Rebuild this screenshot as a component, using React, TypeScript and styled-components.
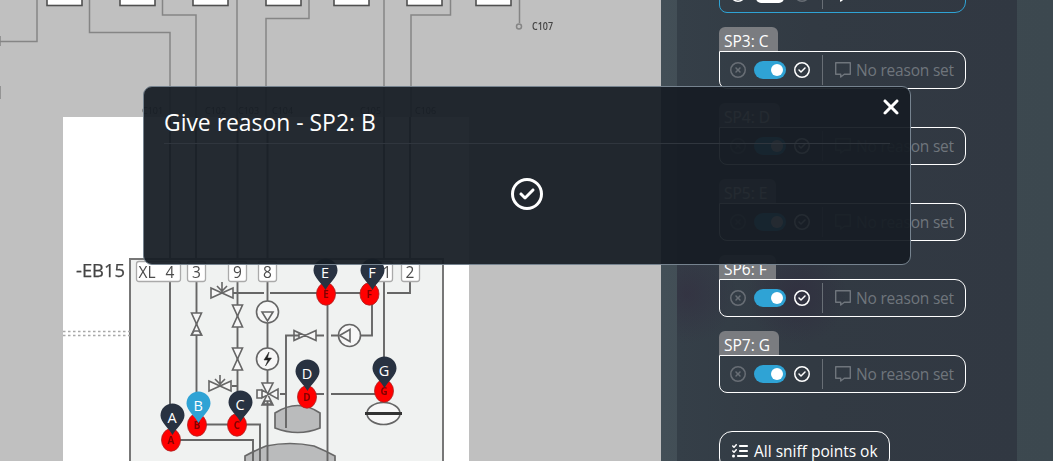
import React from 'react';
import styled, { createGlobalStyle } from 'styled-components';
import { FaRegCircleCheck, FaRegCircleXmark, FaXmark, FaListCheck } from 'react-icons/fa6';

const GlobalStyle = createGlobalStyle`
  * { box-sizing: border-box; }
  body { margin: 0; overflow: hidden; background: #c0c0c0; font-family: 'Open Sans', 'Noto Sans', sans-serif; color: #fff; }
`;

const Page = styled.main`
  position: relative;
  display: flex;
  width: 1053px;
  height: 461px;
  overflow: hidden;
`;

const DiagramPane = styled.section`
  flex: 0 0 661px;
  height: 461px;
  overflow: hidden;
  background: #c0c0c0;
  svg { display: block; }
`;

const Drawing = styled.g`
  filter: blur(0.5px);
`;

const Sidebar = styled.aside`
  flex: 1;
  height: 461px;
  padding: 0 36px 0 16px;
  background: linear-gradient(90deg, #434f57, #3e4a51 30%, #3c484f);
`;

const Panel = styled.div`
  height: 461px;
  padding-left: 42px;
  overflow: hidden;
  background:
    radial-gradient(circle at 10px 294px, rgba(50, 42, 62, 0.5), transparent 50px),
    radial-gradient(circle at 120px 295px, rgba(48, 42, 62, 0.6), transparent 50px),
    linear-gradient(90deg, #353f48, #323a43 40%, #313842);
`;

const PointList = styled.div`
  display: flex;
  flex-direction: column;
  gap: 14px;
  margin-top: -25px;
`;

const Point = styled.div``;

const Tag = styled.div<{ $width: number }>`
  width: ${(p) => p.$width}px;
  height: 24px;
  padding-left: 5px;
  border-radius: 6px 6px 0 0;
  background: #7a7c80;
  font-size: 15.5px;
  line-height: 28px;
  white-space: nowrap;
`;

const Box = styled.div<{ $active?: boolean }>`
  display: flex;
  align-items: center;
  width: 247px;
  height: 38px;
  padding-left: 10px;
  border: 1px solid ${(p) => (p.$active ? '#2fa3d5' : '#fff')};
  border-radius: ${(p) => (p.$active ? '0 0 11px 8px' : '0 11px 11px 8px')};
`;

const StateIcon = styled.span<{ $dim?: boolean }>`
  display: flex;
  font-size: 16px;
  color: ${(p) => (p.$dim ? '#686e75' : '#fff')};
`;

const Toggle = styled.span<{ $on: boolean }>`
  display: flex;
  align-items: center;
  justify-content: flex-end;
  width: ${(p) => (p.$on ? 32 : 28)}px;
  height: 18px;
  margin: 0 ${(p) => (p.$on ? 8 : 10)}px;
  padding: 3px;
  border-radius: ${(p) => (p.$on ? '9px' : '5px')};
  background: ${(p) => (p.$on ? '#2fa3d5' : '#fff')};
  &::after {
    content: '';
    width: 12px;
    height: 12px;
    border-radius: 50%;
    background: #fff;
  }
`;

const Reason = styled.div<{ $bright?: boolean }>`
  display: flex;
  align-items: center;
  gap: 5px;
  height: 30px;
  margin-left: 12px;
  padding-left: 12px;
  border-left: 1px solid #686e75;
  color: ${(p) => (p.$bright ? '#fff' : '#6f757c')};
  font-size: 15.5px;
  letter-spacing: -0.2px;
  line-height: 20px;
  white-space: nowrap;
  span { padding-bottom: 1px; }
`;

const AllOk = styled.button`
  display: flex;
  align-items: center;
  gap: 6px;
  width: 171px;
  height: 40px;
  margin-top: 38px;
  padding: 0 0 0 12px;
  border: 1px solid #fff;
  border-radius: 13px;
  background: transparent;
  color: #fff;
  font: 15.5px 'Open Sans', sans-serif;
  white-space: nowrap;
`;

const Dialog = styled.div`
  position: absolute;
  left: 143px;
  top: 86px;
  width: 768px;
  height: 179px;
  padding: 20px;
  border: 1px solid #76838f;
  border-radius: 9px;
  background: rgba(22, 29, 36, 0.94);
`;

const DialogTitle = styled.h1`
  height: 37px;
  margin: 0;
  padding-top: 1px;
  border-bottom: 1px solid #30363e;
  font-size: 22.9px;
  font-weight: 400;
  line-height: 30px;
`;

const DialogBody = styled.div`
  display: flex;
  justify-content: center;
  padding-top: 34px;
  font-size: 32px;
`;

const Close = styled.span`
  position: absolute;
  top: 8px;
  right: 7px;
  display: flex;
  font-size: 24px;
`;

function CommentIcon() {
  return (
    <svg width="16" height="16" viewBox="0 0 16 16" fill="none" stroke="currentColor" strokeWidth="1.4" strokeLinejoin="round">
      <path d="M.7 .8h14.6v11.4h-6l-3.6 2.8v-2.8h-5z" />
    </svg>
  );
}

type SniffPoint = { name?: string; width: number; active?: boolean };

function PointRow({ name, width, active }: SniffPoint) {
  return (
    <Point>
      {name && <Tag $width={width}>{name}</Tag>}
      <Box $active={active}>
        <StateIcon $dim={!active}><FaRegCircleXmark /></StateIcon>
        <Toggle $on={!active} />
        <StateIcon $dim={active}><FaRegCircleCheck /></StateIcon>
        <Reason $bright={active}><CommentIcon />{!active && <span>No reason set</span>}</Reason>
      </Box>
    </Point>
  );
}

const points: SniffPoint[] = [
  { width: 58, active: true },
  { name: 'SP3: C', width: 59 },
  { name: 'SP4: D', width: 61 },
  { name: 'SP5: E', width: 57 },
  { name: 'SP6: F', width: 57 },
  { name: 'SP7: G', width: 60 },
];

const pins: [string, number, number, number, number][] = [
  ['A', 172.5, 435, 171, 440],
  ['B', 198.5, 423, 197, 425],
  ['C', 240.5, 422, 237, 425],
  ['D', 307.5, 391, 307, 397],
  ['E', 325.5, 290, 326, 294],
  ['F', 372.5, 290, 369.5, 294],
  ['G', 384.5, 388, 384, 391],
];

const wireLabels: [string, number][] = [
  ['C101', 142],
  ['C102', 205],
  ['C103', 238],
  ['C104', 272],
  ['C105', 360],
  ['C106', 415],
];

const valve = 'M-5-11H5L-5 11H5Z';

function Diagram() {
  return (
    <svg width="661" height="461" viewBox="0 0 661 461" fontFamily="'Open Sans', 'Noto Sans', sans-serif">
      <Drawing>
        <g fill="none" stroke="#858585" strokeWidth="1.5">
          <path d="M0 41.5H37V0M89.5 0V32.5H170V272M162.5 0V15H196V272M237 0V272M309 0V18.5H266V272M384 0V272M450.5 0V15H411V272M519.5 0V23" />
          <circle cx="519" cy="26.5" r="2.5" />
          <path d="M0 36v10M0 86v13" />
        </g>
        <g fill="#fff" stroke="#505050" strokeWidth="1.6">
          {[47, 120, 193, 266, 334, 407, 476].map((x) => <rect key={x} x={x} y="-10" width="35" height="15.5" />)}
        </g>
        <text x="532" y="29.5" fontSize="10" fontWeight="600" fill="#444" textLength="21" lengthAdjust="spacingAndGlyphs">C107</text>
        <rect x="63" y="117" width="406" height="350" fill="#fff" />
        <path d="M170 117V270M196 117V270M237.5 117V270M267.5 117V270M384 117V270M410 117V270" stroke="#707070" strokeWidth="2" />
        <g fontSize="9" fill="#444">
          {wireLabels.map(([t, x]) => (
            <text key={t} x={x} y="114" textLength="21" lengthAdjust="spacingAndGlyphs">{t}</text>
          ))}
        </g>
        <rect x="130" y="259" width="313" height="230" fill="#f0f2f1" stroke="#777" strokeWidth="2" />
        <text x="76" y="276.5" fontSize="17.5" fill="#444" stroke="#444" strokeWidth=".25" textLength="49" lengthAdjust="spacingAndGlyphs">-EB15</text>
        <path d="M63 331.5H130M63 335.5H130" stroke="#a8a8a8" strokeWidth="1.7" strokeDasharray="2.5 2.5" />
        <path d="M275 413Q298 398 320 413V428Q298 437 275 428Z" fill="#babbbc" stroke="#686868" strokeWidth="1.7" />
        <path d="M245 465V456Q254 451 266 446Q290 441 314 446Q326 451 335 456V465Z" fill="#babbbc" stroke="#686868" strokeWidth="1.7" />
        <g fill="none" stroke="#666" strokeWidth="1.9">
          <path d="M170 280V433M196.5 280V420M237.5 280V415M267.5 280V461" />
          <path d="M233 293H264M270 293H374M387 293H410V280M372 300V335.5H360M350 335.5H331M324 335.5H286V428M384 280V380M327.5 305V461" />
          <path d="M205 424.5H260V461M180 440H253V461M280 394H286M316 394H324M331 394H376M232 386H237" />
        </g>
        <g fill="#f7f7f7" stroke="#666" strokeWidth="1.6">
          <path d={valve} transform="translate(196.5 324)" />
          <path d="M191.5 335l2.5-4h5l2.5 4Z" />
          <path d={valve} transform="translate(237.5 316)" />
          <path d={valve} transform="translate(237.5 359)" />
          <path d="M211 288V298L233 288V298ZM222 293V282M217 286L222 291L227 286" />
          <path d="M209 381V391L231 381V391ZM220 386V375M215 379L220 384L225 379" />
          <path d="M294 330.5V340.5L316 330.5V340.5ZM294 330.5L299 333V338L294 340.5" />
          <path d="M262 383H273L262 405H273ZM278 389V399L262 390V398ZM257 390H262V398H257ZM263 404L265 401H270L272 404Z" />
          <circle cx="267.5" cy="312" r="11" />
          <path d="M262 312H273L267.5 321Z" />
          <circle cx="267.5" cy="359" r="11" />
          <circle cx="349.5" cy="335.5" r="11" />
          <path d="M350 329.5V341.5L339.5 335.5Z" />
          <ellipse cx="383.5" cy="413.5" rx="16.5" ry="11" />
        </g>
        <path d="M269 352L264 360H268L265.5 366L271.5 358H267.5Z" fill="#222" stroke="#222" strokeWidth=".5" />
        <path d="M365 413.5H402" stroke="#333" strokeWidth="3" />
        <g fill="#fff" stroke="#aaa" strokeWidth="1.3">
          <rect x="136.5" y="261.5" width="44" height="20" rx="2.5" />
          {[187.5, 228.5, 258.5, 374.5, 401.5].map((x) => <rect key={x} x={x} y="261.5" width="18" height="20" rx="2.5" />)}
        </g>
        <g fontSize="15.5" fill="#4c4c4c" textAnchor="middle">
          <text x="147" y="278">XL</text><text x="170" y="278">4</text><text x="196.5" y="278">3</text>
          <text x="237.5" y="278">9</text><text x="267.5" y="278">8</text><text x="387" y="278">1</text><text x="410" y="278">2</text>
        </g>
        {pins.map(([label, , , cx, cy]) => (
          <g key={label}>
            <ellipse cx={cx} cy={cy} rx="9.5" ry="11.2" fill="#f00" stroke="#a22" strokeWidth=".8" />
            <text x={cx} y={cy + 4} fontSize="10" fontWeight="700" fill="#810000" textAnchor="middle">{label}</text>
          </g>
        ))}
      </Drawing>
      {pins.map(([label, x, y]) => (
        <g key={label}>
          <path
            d={`M${x} ${y}C${x - 3} ${y - 6} ${x - 12} ${y - 13} ${x - 12} ${y - 19.5}A12 12 0 0 1 ${x + 12} ${y - 19.5}C${x + 12} ${y - 13} ${x + 3} ${y - 6} ${x} ${y}Z`}
            fill={label === 'B' ? '#2fa3d5' : '#283241'}
          />
          <text x={x - 0.4} y={y - 12.5} fontSize="14.5" fill="#fff" textAnchor="middle">{label}</text>
        </g>
      ))}
    </svg>
  );
}

export default function App() {
  return (
    <>
      <GlobalStyle />
      <Page>
        <DiagramPane><Diagram /></DiagramPane>
        <Sidebar>
          <Panel>
            <PointList>{points.map((p, i) => <PointRow key={i} {...p} />)}</PointList>
            <AllOk><FaListCheck size={16} /><span>All sniff points ok</span></AllOk>
          </Panel>
        </Sidebar>
        <Dialog>
          <DialogTitle>Give reason - SP2: B</DialogTitle>
          <DialogBody><FaRegCircleCheck /></DialogBody>
          <Close><FaXmark /></Close>
        </Dialog>
      </Page>
    </>
  );
}
